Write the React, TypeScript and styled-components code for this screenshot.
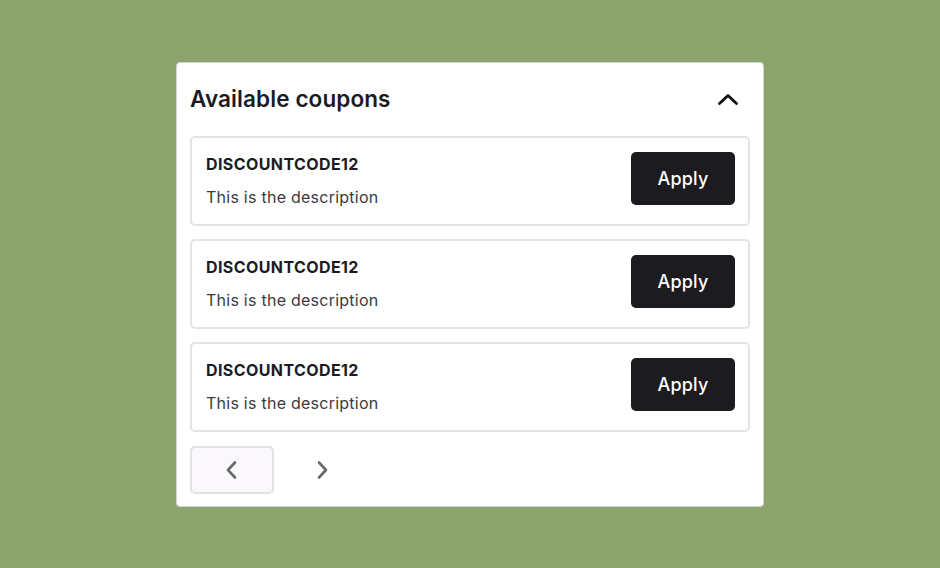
import React from 'react';
import styled, { createGlobalStyle } from 'styled-components';

const GlobalStyle = createGlobalStyle`
  html, body {
    margin: 0;
    padding: 0;
    height: 100%;
  }
  body {
    background: #8ba46e;
    font-family: Inter, "Liberation Sans", sans-serif;
  }
`;

const Page = styled.div`
  display: flex;
  align-items: center;
  justify-content: center;
  height: 100vh;
`;

const Card = styled.section`
  box-sizing: border-box;
  width: 588px;
  background: #fff;
  border: 1px solid #d4d4d4;
  border-radius: 4px;
  padding: 13px 13px 12px;
  display: flex;
  flex-direction: column;
`;

const Header = styled.div`
  display: flex;
  align-items: center;
  justify-content: space-between;
  height: 46px;
  margin-bottom: 14px;
`;

const Title = styled.h2`
  margin: 0;
  font-size: 22.5px;
  font-weight: 600;
  color: #1c1b1f;
  letter-spacing: 0.1px;
`;

const IconButton = styled.button`
  display: flex;
  align-items: center;
  justify-content: center;
  width: 24px;
  height: 24px;
  padding: 0;
  margin-right: 10px;
  border: none;
  background: none;
  color: #111;
  cursor: pointer;
`;

const List = styled.div`
  display: flex;
  flex-direction: column;
  gap: 13px;
`;

const Coupon = styled.div`
  box-sizing: border-box;
  height: 90px;
  border: 2px solid #e4e3e6;
  border-radius: 5px;
  padding: 14px 13px 0 14px;
  display: flex;
  justify-content: space-between;
  align-items: flex-start;
`;

const Info = styled.div`
  display: flex;
  flex-direction: column;
  gap: 9px;
`;

const Code = styled.div`
  font-size: 16px;
  line-height: 24px;
  font-weight: 700;
  color: #1c1b1f;
  letter-spacing: 0.4px;
`;

const Description = styled.div`
  font-size: 16px;
  line-height: 24px;
  color: #3b3a3e;
  letter-spacing: 0.25px;
`;

const ApplyButton = styled.button`
  width: 104px;
  height: 53px;
  border: none;
  border-radius: 5px;
  background: #1c1b1f;
  color: #fff;
  font-family: inherit;
  font-size: 18px;
  font-weight: 500;
  letter-spacing: 0.2px;
  cursor: pointer;
`;

const Pager = styled.div`
  display: flex;
  gap: 6px;
  margin-top: 14px;
`;

const PageButton = styled.button<{ $active?: boolean }>`
  box-sizing: border-box;
  width: 84px;
  height: 48px;
  display: flex;
  align-items: center;
  justify-content: center;
  border-radius: 5px;
  border: 2px solid ${(p) => (p.$active ? '#e2e1e4' : 'transparent')};
  background: ${(p) => (p.$active ? '#faf8fb' : 'transparent')};
  color: #68676b;
  cursor: pointer;
`;

const Chevron = ({ d, size = 24, width = 2.5 }: { d: string; size?: number; width?: number }) => (
  <svg width={size} height={size} viewBox="0 0 24 24" fill="none" stroke="currentColor" strokeWidth={width} strokeLinecap="round" strokeLinejoin="round">
    <path d={d} />
  </svg>
);

const coupons = [
  { code: 'DISCOUNTCODE12', description: 'This is the description' },
  { code: 'DISCOUNTCODE12', description: 'This is the description' },
  { code: 'DISCOUNTCODE12', description: 'This is the description' },
];

const App: React.FC = () => {
  return (
    <Page>
      <GlobalStyle />
      <Card>
        <Header>
          <Title>Available coupons</Title>
          <IconButton aria-label="Collapse">
            <Chevron d="M3.5 16.5l8.5-8 8.5 8" width={2.8} />
          </IconButton>
        </Header>
        <List>
          {coupons.map((c, i) => (
            <Coupon key={i}>
              <Info>
                <Code>{c.code}</Code>
                <Description>{c.description}</Description>
              </Info>
              <ApplyButton>Apply</ApplyButton>
            </Coupon>
          ))}
        </List>
        <Pager>
          <PageButton $active aria-label="Previous">
            <Chevron d="M15 4.5l-7 7.5 7 7.5" width={2.6} />
          </PageButton>
          <PageButton aria-label="Next">
            <Chevron d="M9 4.5l7 7.5-7 7.5" width={2.6} />
          </PageButton>
        </Pager>
      </Card>
    </Page>
  );
};

export default App;
